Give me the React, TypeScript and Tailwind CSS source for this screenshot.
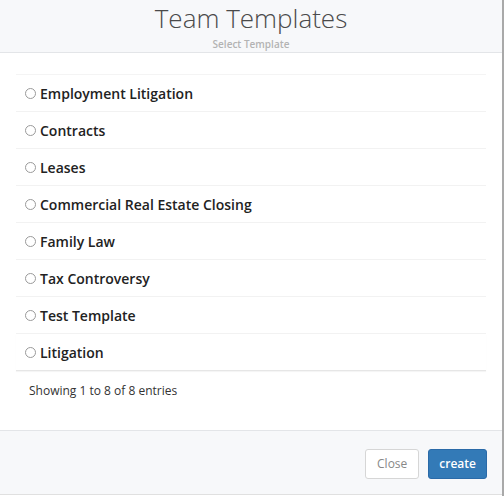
const TEMPLATES = [
  'Employment Litigation',
  'Contracts',
  'Leases',
  'Commercial Real Estate Closing',
  'Family Law',
  'Tax Controversy',
  'Test Template',
  'Litigation',
]

export default function App() {
  return (
    <div
      className="w-[504px] h-[496px] bg-white flex flex-col border-r-2 border-[#a9a9a9]"
      style={{ fontFamily: '"Open Sans", sans-serif' }}
    >
      <div className="h-[53px] bg-[#f7f8fa] border-b border-[#e3e5e8] flex flex-col items-center">
        <h2 className="text-[26px] font-light text-[#4a4a4a] leading-none mt-[5px]">Team Templates</h2>
        <div className="text-[10px] font-semibold text-[#b3b3b3] mt-[6px]">Select Template</div>
      </div>

      <div className="flex-1 px-4 pt-[21px]">
        <div className="border-t border-[#f4f4f4]">
          {TEMPLATES.map((t, i) => (
            <label
              key={t}
              className={
                'flex items-center h-[37px] pl-[9px] border-b ' +
                (i === TEMPLATES.length - 1 ? 'border-[#e6e6e6] shadow-[0_1px_1px_rgba(0,0,0,0.04)]' : 'border-[#f2f2f2]')
              }
            >
              <span className="w-[11px] h-[11px] rounded-full border border-[#9a9a9a] bg-white" />
              <span className="ml-[4px] text-[14px] font-semibold text-[#222]">{t}</span>
            </label>
          ))}
        </div>
        <div className="text-[12px] text-[#333] pl-[13px] mt-[11px]">Showing 1 to 8 of 8 entries</div>
      </div>

      <div className="h-[65px] bg-[#f7f8fa] border-t border-[#e3e5e8] border-b border-b-[#e0e0e0] flex items-start justify-end gap-[9px] pt-[18px] pr-[15px] mb-[1px]">
        <button className="h-[30px] px-[11px] rounded-[3px] border border-[#d6d6d6] bg-white text-[12px] text-[#888]">
          Close
        </button>
        <button className="h-[30px] px-[10px] rounded-[3px] border border-[#2a6aa8] bg-[#337ab7] text-[12px] font-semibold text-white">
          create
        </button>
      </div>
    </div>
  )
}
